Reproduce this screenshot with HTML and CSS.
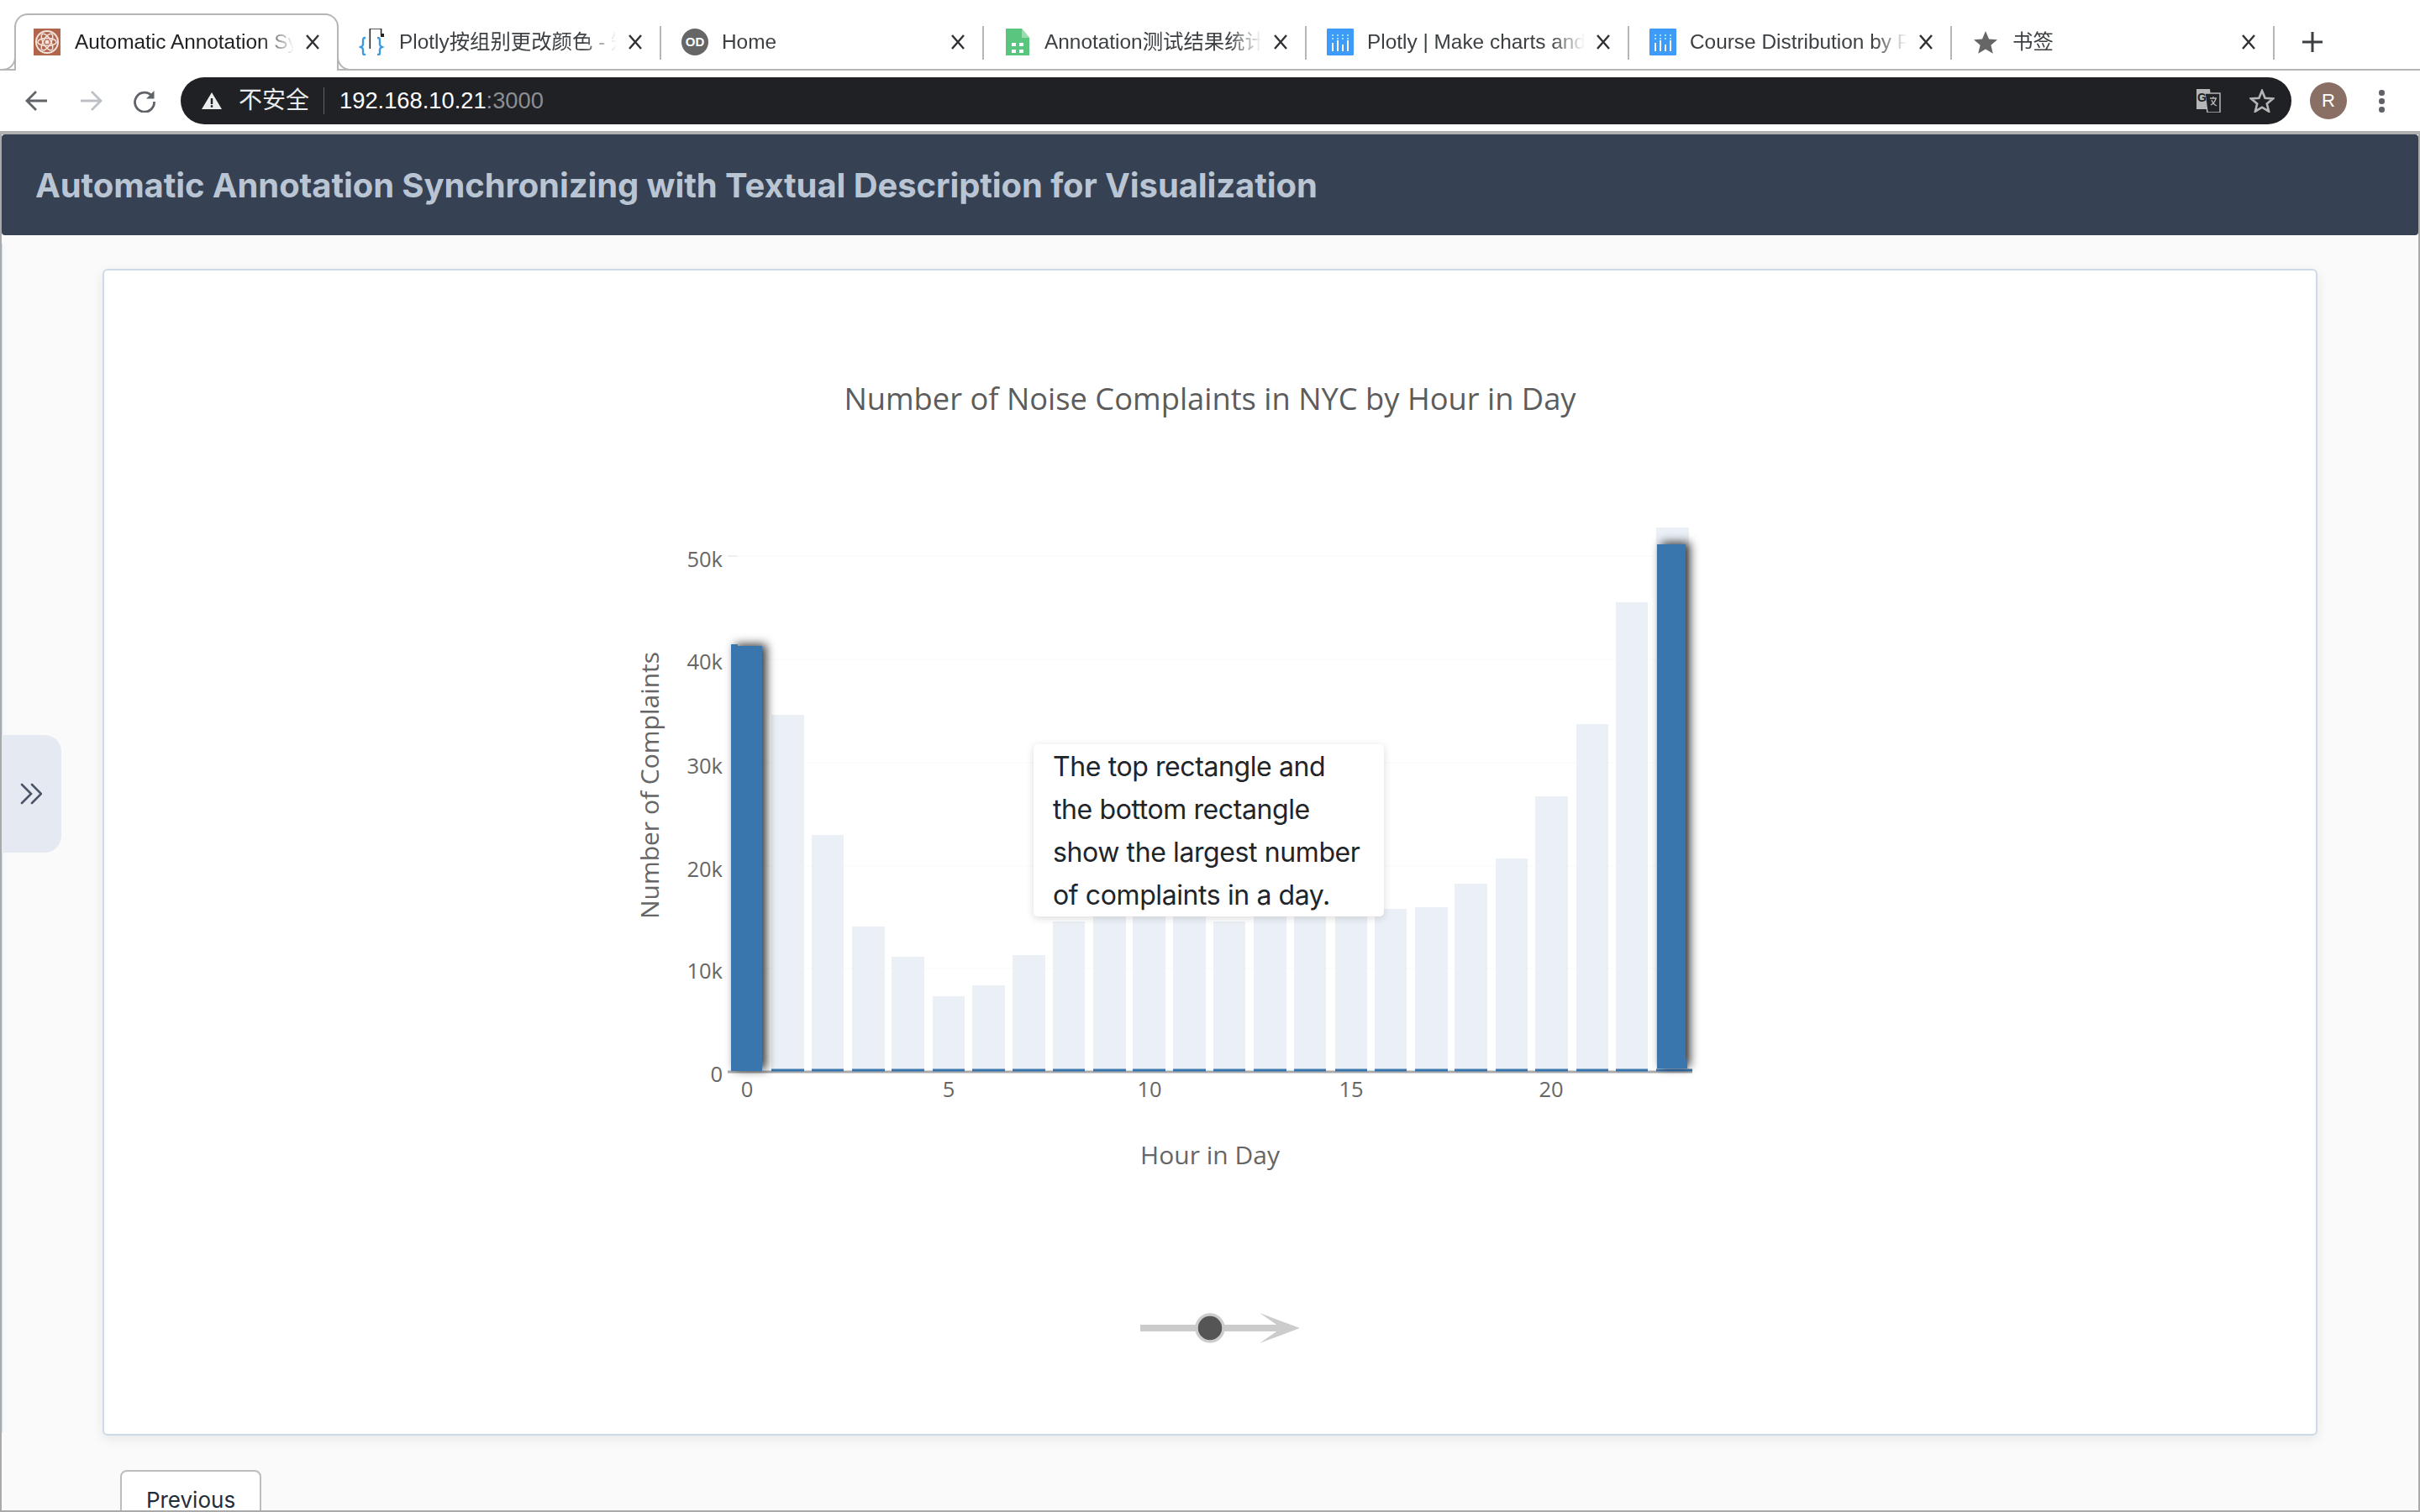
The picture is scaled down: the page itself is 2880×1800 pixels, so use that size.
FILE: index.html
```html
<!DOCTYPE html>
<html lang="en">
<head>
    <meta charset="UTF-8">
    <title>Automatic Annotation</title>
    <link rel="stylesheet" href="styles.css">
</head>
<body>
    <div class="tabstrip">
        <div class="tab active">
            <svg class="tab-icon" viewBox="0 0 32 32">
                <rect width="32" height="32" fill="#b0664c"/>
                <circle cx="16" cy="16" r="13" fill="none" stroke="#f3e3dc" stroke-width="2"/>
                <ellipse cx="16" cy="16" rx="11" ry="4.5" fill="none" stroke="#f3e3dc" stroke-width="1.5" transform="rotate(60 16 16)"/>
                <ellipse cx="16" cy="16" rx="11" ry="4.5" fill="none" stroke="#f3e3dc" stroke-width="1.5" transform="rotate(-60 16 16)"/>
                <ellipse cx="16" cy="16" rx="11" ry="4.5" fill="none" stroke="#f3e3dc" stroke-width="1.5"/>
                <circle cx="16" cy="16" r="2.5" fill="#f3e3dc"/>
            </svg>
            <span class="tab-title">Automatic Annotation Synchronizing</span>
            <svg class="tab-close" viewBox="0 0 18 18"><path d="M2 1l14 16M16 1L2 17"/></svg>
        </div>
        <div class="tab">
            <svg class="tab-icon" viewBox="0 0 32 32">
                <path d="M14 32V8h14v8" fill="none" stroke="#222" stroke-width="1.6" transform="translate(0 -8) scale(.95 1)"/>
                <path d="M8 11c-3 0-3 1-3 4v4c0 2-1 2-3 3 2 1 3 1 3 3v3c0 3 0 3 3 3" fill="none" stroke="#3b9be0" stroke-width="2.4"/>
                <path d="M22 11c3 0 3 1 3 4v4c0 2 1 2 3 3-2 1-3 1-3 3v3c0 3 0 3-3 3" fill="none" stroke="#3b9be0" stroke-width="2.4"/>
                <rect x="26" y="6" width="4" height="4" fill="#222"/>
            </svg>
            <span class="tab-title">Plotly按组别更改颜色 - 知乎</span>
            <svg class="tab-close" viewBox="0 0 18 18"><path d="M2 1l14 16M16 1L2 17"/></svg>
        </div>
        <span class="tab-sep"></span>
        <div class="tab">
            <svg class="tab-icon" viewBox="0 0 32 32">
                <circle cx="16" cy="16" r="16" fill="#666"/>
                <text class="od-mark" x="16" y="21">OD</text>
            </svg>
            <span class="tab-title">Home</span>
            <svg class="tab-close" viewBox="0 0 18 18"><path d="M2 1l14 16M16 1L2 17"/></svg>
        </div>
        <span class="tab-sep"></span>
        <div class="tab">
            <svg class="tab-icon" viewBox="0 0 32 32">
                <path d="M2 0h19l9 11v21H2z" fill="#5ac57f"/>
                <path d="M21 0l9 11h-9z" fill="#9adcb0"/>
                <path d="M9 17h5v4H9zM18 17h5v4h-5zM9 25h5v4H9zM18 25h5v4h-5z" fill="#fff"/>
            </svg>
            <span class="tab-title">Annotation测试结果统计表格</span>
            <svg class="tab-close" viewBox="0 0 18 18"><path d="M2 1l14 16M16 1L2 17"/></svg>
        </div>
        <span class="tab-sep"></span>
        <div class="tab">
            <svg class="tab-icon" viewBox="0 0 32 32">
                <rect width="32" height="32" rx="1" fill="#3f9bf8"/>
                <path d="M6 11h2v2H6zM12 11h2v2h-2zM18 11h2v2h-2zM24 11h2v2h-2zM6 7h2v2H6zM12 7h2v2h-2zM18 7h2v2h-2zM24 7h2v2h-2z" fill="#9fe3f7"/>
                <path d="M6 17h2v10H6zM12 14h2v13h-2zM18 19h2v8h-2zM24 14h2v13h-2z" fill="#fff"/>
            </svg>
            <span class="tab-title">Plotly | Make charts and dashboards</span>
            <svg class="tab-close" viewBox="0 0 18 18"><path d="M2 1l14 16M16 1L2 17"/></svg>
        </div>
        <span class="tab-sep"></span>
        <div class="tab">
            <svg class="tab-icon" viewBox="0 0 32 32">
                <rect width="32" height="32" rx="1" fill="#3f9bf8"/>
                <path d="M6 11h2v2H6zM12 11h2v2h-2zM18 11h2v2h-2zM24 11h2v2h-2zM6 7h2v2H6zM12 7h2v2h-2zM18 7h2v2h-2zM24 7h2v2h-2z" fill="#9fe3f7"/>
                <path d="M6 17h2v10H6zM12 14h2v13h-2zM18 19h2v8h-2zM24 14h2v13h-2z" fill="#fff"/>
            </svg>
            <span class="tab-title">Course Distribution by Plotly</span>
            <svg class="tab-close" viewBox="0 0 18 18"><path d="M2 1l14 16M16 1L2 17"/></svg>
        </div>
        <span class="tab-sep"></span>
        <div class="tab">
            <svg class="tab-icon" viewBox="0 0 32 32">
                <path d="M16 3l4 9.500 10 .8-7.600 6.500 2.400 10L16 24.500 7.200 29.800l2.400-10L2 13.300l10-.8z" fill="#666"/>
            </svg>
            <span class="tab-title">书签</span>
            <svg class="tab-close" viewBox="0 0 18 18"><path d="M2 1l14 16M16 1L2 17"/></svg>
        </div>
        <span class="tab-sep"></span>
        <svg class="new-tab" viewBox="0 0 24 24"><path d="M12 0v24M0 12h24"/></svg>
    </div>

    <div class="toolbar">
        <svg class="nav-icon" viewBox="0 0 28 28"><path d="M26 14H3M13 3L2 14l11 11"/></svg>
        <svg class="nav-icon off" viewBox="0 0 28 28"><path d="M2 14h23M15 3l11 11-11 11"/></svg>
        <svg class="nav-icon" viewBox="0 0 28 28"><path d="M23 8.500A11.500 11.500 0 1 0 25.500 15"/><path class="solid" d="M25.500 2v9.500H16z"/></svg>
        <div class="omnibox">
            <svg class="warn" viewBox="0 0 24 20"><path d="M12 0l12 20H0z" fill="#eceded"/><path d="M10.800 7h2.400v7h-2.400zM10.800 15.300h2.400v2.400h-2.400z" fill="#202124"/></svg>
            <span class="insecure">不安全</span>
            <span class="omni-sep"></span>
            <span class="url">192.168.10.21<span class="port">:3000</span></span>
            <svg class="translate" viewBox="0 0 30 28">
                <path d="M1 0h16l3 24H1z" fill="#b4b6b8"/>
                <path d="M11 5h18v23H14z" fill="#202124" stroke="#b4b6b8" stroke-width="1.500"/>
                <text class="g-mark" x="2" y="15">G</text>
                <path d="M17 11h8M21 9v2M24 11c-1 5-4 7-6 8M19 13c1 3 4 6 6 7" fill="none" stroke="#b4b6b8" stroke-width="1.300"/>
            </svg>
            <svg class="bookmark" viewBox="0 0 30 28"><path d="M15 2l3.600 8.800 9.400.7-7.200 6 2.300 9.200L15 21.700l-8.100 5 2.300-9.200-7.200-6 9.400-.7z"/></svg>
        </div>
        <div class="avatar">R</div>
        <div class="menu-dots"><span></span><span></span><span></span></div>
    </div>

    <div class="page">
        <header class="app-header">
            <h1>Automatic Annotation Synchronizing with Textual Description for Visualization</h1>
        </header>
        <main class="content">
            <div class="drawer-edge"></div>
            <div class="drawer-toggle">
                <svg viewBox="0 0 26 26"><path d="M2 2l11 11L2 24M14 2l11 11-11 11"/></svg>
            </div>
            <section class="card">
                <div class="chart-wrap">
                    <svg class="chart" viewBox="740 440 1400 960">
                        <text class="chart-title" x="1440" y="488">Number of Noise Complaints in NYC by Hour in Day</text>

                        <g class="grid">
                            <path d="M878 662H2010M878 785H2010M878 908H2010M878 1031H2010M878 1153H2010"/>
                        </g>
                        <path class="tick-mark" d="M866 662h12"/>

                        <g class="bars-faded">
                            <rect x="918" y="851" width="39" height="424"/>
                            <rect x="966" y="994" width="38" height="281"/>
                            <rect x="1014" y="1103" width="39" height="172"/>
                            <rect x="1061" y="1139" width="39" height="136"/>
                            <rect x="1110" y="1186" width="38" height="89"/>
                            <rect x="1157" y="1173" width="39" height="102"/>
                            <rect x="1205" y="1137" width="39" height="138"/>
                            <rect x="1253" y="1097" width="38" height="178"/>
                            <rect x="1301" y="1080" width="39" height="195"/>
                            <rect x="1348" y="1080" width="39" height="195"/>
                            <rect x="1396" y="1080" width="39" height="195"/>
                            <rect x="1444" y="1097" width="38" height="178"/>
                            <rect x="1492" y="1080" width="39" height="195"/>
                            <rect x="1540" y="1075" width="38" height="200"/>
                            <rect x="1589" y="1075" width="38" height="200"/>
                            <rect x="1636" y="1082" width="38" height="193"/>
                            <rect x="1684" y="1080" width="39" height="195"/>
                            <rect x="1731" y="1052" width="39" height="223"/>
                            <rect x="1780" y="1022" width="38" height="253"/>
                            <rect x="1827" y="948" width="39" height="327"/>
                            <rect x="1876" y="862" width="38" height="413"/>
                            <rect x="1923" y="717" width="38" height="558"/>
                            <rect x="1971" y="628" width="39" height="647"/>
                        </g>

                        <path class="axis" d="M866 1276H2014"/>
                        <g class="base-lines">
                            <path d="M918 1274h39M966 1274h38M1014 1274h39M1061 1274h39M1110 1274h38M1157 1274h39M1205 1274h39M1253 1274h38M1301 1274h39M1348 1274h39M1396 1274h39M1444 1274h38M1492 1274h39M1540 1274h38M1589 1274h38M1636 1274h38M1684 1274h39M1731 1274h39M1780 1274h38M1827 1274h39M1876 1274h38M1923 1274h38M1971 1274h43"/>
                        </g>

                        <g class="bars-active">
                            <rect x="870" y="769" width="37" height="506"/>
                            <rect x="1972" y="648" width="34" height="624"/>
                        </g>
                        <rect class="bar-sliver" x="870" y="767" width="8" height="3"/>
                        <rect class="bar-sliver" x="2006" y="1261" width="2" height="11"/>

                        <g class="tick-y">
                            <text x="860" y="675">50k</text>
                            <text x="860" y="797">40k</text>
                            <text x="860" y="921">30k</text>
                            <text x="860" y="1044">20k</text>
                            <text x="860" y="1165">10k</text>
                            <text x="860" y="1288">0</text>
                        </g>
                        <g class="tick-x">
                            <text x="889" y="1306">0</text>
                            <text x="1129" y="1306">5</text>
                            <text x="1368" y="1306">10</text>
                            <text x="1608" y="1306">15</text>
                            <text x="1846" y="1306">20</text>
                        </g>
                        <text class="axis-title" x="1440" y="1386">Hour in Day</text>
                        <text class="axis-title" transform="translate(784 935) rotate(-90)">Number of Complaints</text>
                    </svg>
                    <div class="chart-note">The top rectangle and the bottom rectangle show the largest number of complaints in a day.</div>
                </div>
                <svg class="stepper" viewBox="0 0 220 40">
                    <path class="stepper-track" d="M27 16h168v8H27z"/>
                    <path class="stepper-track" d="M169 2l48 18-48 18 26-18z"/>
                    <circle class="stepper-knob" cx="110" cy="20" r="16"/>
                </svg>
            </section>
            <div class="pager">
                <button class="pager-btn">Previous</button>
            </div>
        </main>
    </div>
</body>
</html>
```
FILE: styles.css
```css
* {
    box-sizing: border-box;
}
html, body {
    margin: 0;
    height: 1800px;
    overflow: hidden;
}
body {
    font-family: 'Inter', 'Noto Sans CJK SC', sans-serif;
    background: #fff;
    display: flex;
    flex-direction: column;
}

/* tab strip */
.tabstrip {
    height: 84px;
    padding-top: 16px;
    display: flex;
    align-items: stretch;
    border-bottom: 2px solid #b5b5b5;
    font-family: 'Liberation Sans', 'Noto Sans CJK SC', sans-serif;
    font-size: 24.4px;
    color: #3c4043;
}
.tab {
    width: 382px;
    display: flex;
    align-items: center;
    padding: 0 20px 0 24px;
    height: 68px;
}
.tab.active {
    position: relative;
    width: 386px;
    margin-left: 17px;
    padding: 0 20px 2px 21px;
    border: 2px solid #b5b5b5;
    border-bottom: none;
    border-radius: 16px 16px 0 0;
    background: #fff;
    color: #202124;
}
.tab.active::before,
.tab.active::after {
    content: "";
    position: absolute;
    bottom: 0;
    width: 16px;
    height: 16px;
    border-bottom: 2px solid #b5b5b5;
}
.tab.active::before {
    left: -18px;
    border-right: 2px solid #b5b5b5;
    border-bottom-right-radius: 16px;
}
.tab.active::after {
    right: -18px;
    border-left: 2px solid #b5b5b5;
    border-bottom-left-radius: 16px;
}
.tab-icon {
    width: 32px;
    height: 32px;
    flex: none;
    margin-right: 16px;
}
.tab.active .tab-icon {
    margin-right: 17px;
}
.tab-title {
    flex: 1;
    min-width: 0;
    margin-right: 13px;
    line-height: 32px;
    white-space: nowrap;
    overflow: hidden;
    -webkit-mask-image: linear-gradient(to left, transparent 0, #000 40px);
    mask-image: linear-gradient(to left, transparent 0, #000 40px);
}
.tab-close {
    width: 18px;
    height: 18px;
    flex: none;
    fill: none;
    stroke: #303134;
    stroke-width: 2.4;
}
.tab-sep {
    width: 2px;
    height: 40px;
    margin-top: 15px;
    background: #b5b5b5;
    flex: none;
}
.new-tab {
    width: 24px;
    height: 24px;
    margin: 22px 0 0 33px;
    fill: none;
    stroke: #3c4043;
    stroke-width: 3;
}
.od-mark {
    font-size: 15px;
    font-weight: 700;
    fill: #fff;
    text-anchor: middle;
}

/* toolbar */
.toolbar {
    height: 76px;
    padding: 8px 0 4px 30px;
    display: flex;
    align-items: flex-start;
    border-bottom: 4px solid #b0b0b0;
    font-family: 'Liberation Sans', 'Noto Sans CJK SC', sans-serif;
}
.nav-icon {
    width: 28px;
    height: 28px;
    margin: 14px 36px 0 0;
    flex: none;
    fill: none;
    stroke: #5f6368;
    stroke-width: 2.800;
}
.nav-icon.off {
    stroke: #bdc1c6;
}
.nav-icon .solid {
    fill: #5f6368;
    stroke: none;
}
.nav-icon:nth-child(3) {
    margin-right: 29px;
}
.omnibox {
    width: 2512px;
    height: 56px;
    border-radius: 28px;
    background: #202124;
    display: flex;
    align-items: center;
    padding: 0 20px 0 25px;
    color: #e8eaed;
    font-size: 27.300px;
    line-height: 32px;
}
.warn {
    width: 24px;
    height: 20px;
    margin-right: 20px;
}
.insecure {
    font-size: 28px;
}
.omni-sep {
    width: 1px;
    height: 32px;
    background: #5f6368;
    margin: 0 18px 0 17px;
}
.url {
    flex: 1;
    color: #fff;
}
.port {
    color: #8b8e92;
}
.translate {
    width: 30px;
    height: 28px;
    margin-right: 34px;
}
.g-mark {
    font-size: 14px;
    font-weight: 700;
    fill: #202124;
}
.bookmark {
    width: 30px;
    height: 28px;
    fill: none;
    stroke: #b4b6b8;
    stroke-width: 2.600;
}
.avatar {
    width: 44px;
    height: 44px;
    margin: 6px 0 0 22px;
    border-radius: 50%;
    background: #8a6f64;
    color: #fff;
    font-size: 22px;
    line-height: 44px;
    text-align: center;
    flex: none;
}
.menu-dots {
    margin: 15px 0 0 38px;
    display: flex;
    flex-direction: column;
    gap: 3.500px;
}
.menu-dots span {
    width: 6.500px;
    height: 6.500px;
    border-radius: 50%;
    background: #5f6368;
}

/* page */
.page {
    flex: 1;
    min-height: 0;
    display: flex;
    flex-direction: column;
    background: #fafafa;
    border: 2px solid #aaa;
    border-top: none;
    overflow: hidden;
}
.app-header {
    height: 120px;
    flex: none;
    display: flex;
    align-items: center;
    padding-left: 40px;
    background: #364153;
    border-radius: 4px;
}
.app-header h1 {
    margin: 0;
    font-size: 40px;
    font-weight: 700;
    letter-spacing: -0.1px;
    color: #bac5d4;
}
.content {
    position: relative;
    flex: 1;
    min-height: 0;
    padding: 40px 120px 0;
}
.drawer-edge {
    position: absolute;
    left: 0;
    top: 10px;
    height: 1415px;
    width: 1px;
    background: #d5deea;
    box-shadow: 0 0 8px rgba(0, 0, 0, 0.15);
}
.drawer-toggle {
    position: absolute;
    left: 0;
    top: 595px;
    width: 71px;
    height: 140px;
    border-radius: 0 20px 20px 0;
    background: #e5e9f2;
    display: flex;
    align-items: center;
    padding-left: 22px;
}
.drawer-toggle svg {
    width: 26px;
    height: 26px;
    fill: none;
    stroke: #4a5568;
    stroke-width: 2.600;
    stroke-linecap: round;
}
.card {
    height: 1389px;
    background: #fff;
    border: 2px solid #cfdae8;
    border-radius: 6px;
    box-shadow: 0 4px 14px rgba(0, 0, 0, 0.08);
    padding-top: 118px;
    display: flex;
    flex-direction: column;
    align-items: center;
}
.chart-wrap {
    position: relative;
    width: 1400px;
    height: 960px;
    flex: none;
}
.chart {
    display: block;
    width: 1400px;
    height: 960px;
    font-family: 'Open Sans', sans-serif;
}
.chart-title {
    font-size: 36.300px;
    fill: #5c5c5c;
    text-anchor: middle;
}
.grid path {
    stroke: #fcfcfc;
    stroke-width: 2;
}
.tick-mark {
    stroke: #eee;
    stroke-width: 2;
}
.bars-faded rect {
    fill: #ebf0f7;
}
.axis {
    stroke: #aaa;
    stroke-width: 3;
}
.base-lines path {
    stroke: #3a76ae;
    stroke-width: 3;
}
.bars-active rect {
    fill: #3a76ae;
    filter: drop-shadow(5px -2px 6px rgba(0, 0, 0, 0.8));
}
.bar-sliver {
    fill: #3a76ae;
}
.tick-y text,
.tick-x text {
    font-size: 25.500px;
    fill: #666;
}
.tick-y text {
    text-anchor: end;
}
.tick-x text {
    text-anchor: middle;
}
.axis-title {
    font-size: 30px;
    fill: #666;
    text-anchor: middle;
}
.chart-note {
    position: absolute;
    left: 490px;
    top: 446px;
    width: 417px;
    height: 205px;
    padding: 1px 23px;
    background: #fff;
    border-radius: 5px;
    box-shadow: 0 2px 10px rgba(0, 0, 0, 0.15);
    font-size: 32px;
    letter-spacing: -0.4px;
    line-height: 51px;
    color: #212529;
}
.stepper {
    width: 220px;
    height: 40px;
    margin-top: 161px;
    flex: none;
}
.stepper-track {
    fill: #ccc;
}
.stepper-knob {
    fill: #555;
    stroke: #ccc;
    stroke-width: 3.500;
}
.pager {
    padding: 41px 0 0 21px;
}
.pager-btn {
    width: 168px;
    height: 70px;
    padding: 0;
    background: #fff;
    border: 2px solid #bdbdbd;
    border-radius: 8px;
    font-family: 'Inter', sans-serif;
    font-size: 26px;
    color: #1f2d3d;
}
```
